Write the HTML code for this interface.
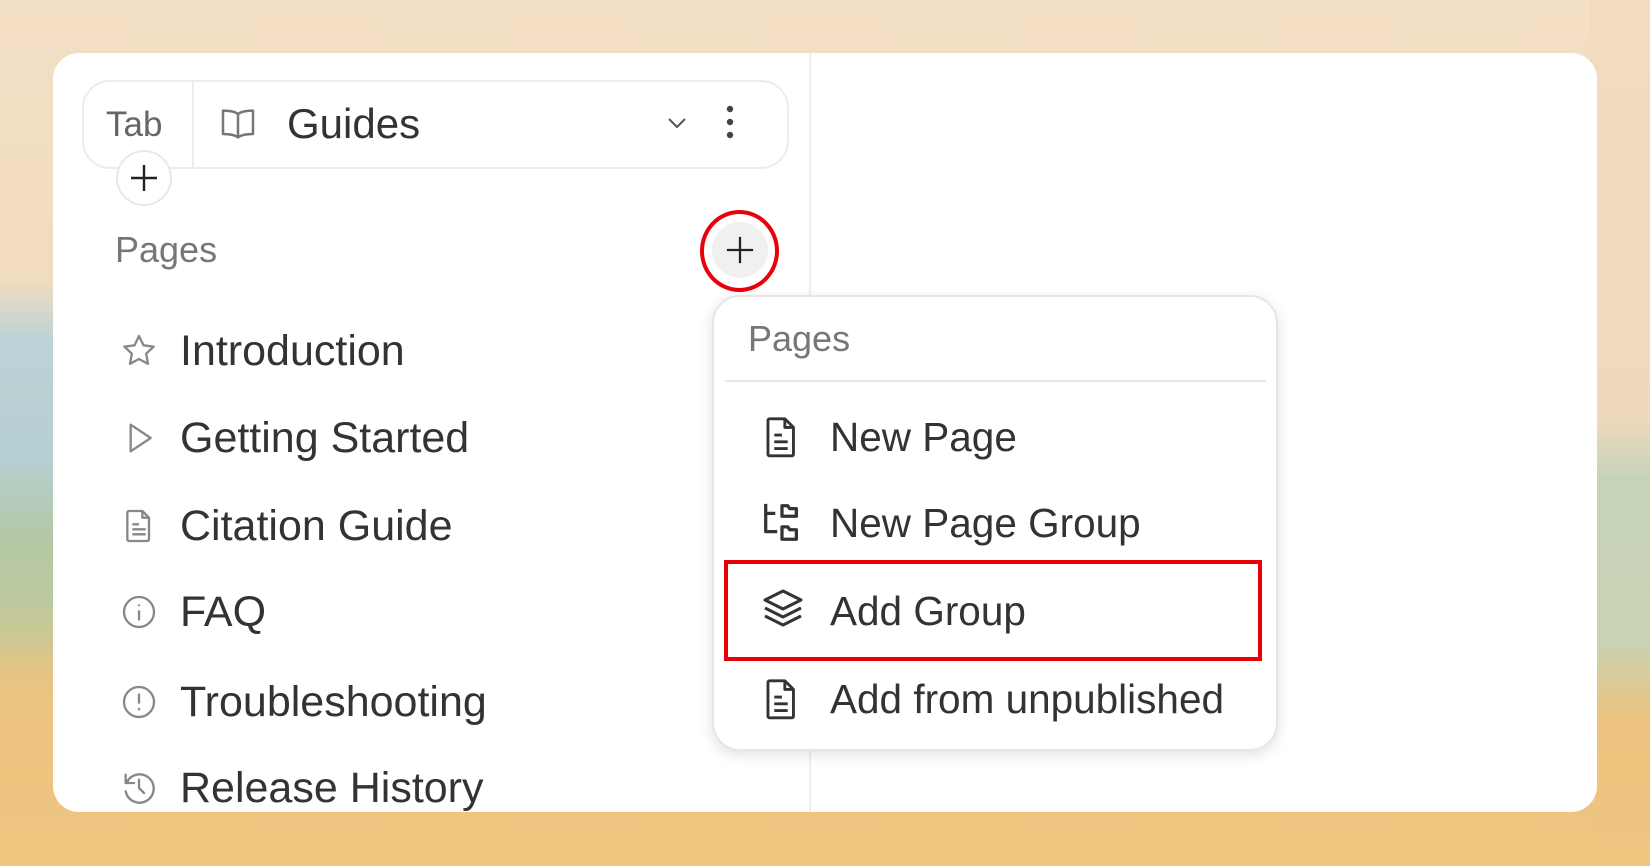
<!DOCTYPE html>
<html><head><meta charset="utf-8"><style>
*{margin:0;padding:0;box-sizing:border-box}
body{width:1650px;height:866px;overflow:hidden;font-family:"Liberation Sans",sans-serif;position:relative;
background:
linear-gradient(180deg,rgba(0,0,0,0) 0,rgba(0,0,0,0) 600px,#ecc47f 720px,#efc680 866px),
linear-gradient(180deg,#f3dfc5 0,#f1dcc0 280px,#bdd2d6 340px,#b6cfd2 460px,#b4c8a4 540px,#c0c99c 640px,#e6c584 700px);
}
.r{position:absolute;right:0;top:0;width:60px;height:866px;background:linear-gradient(180deg,#f2dcc0 0,#efd9bc 420px,#c6d3b8 480px,#c8d2b4 640px,#edc37f 720px,#efc680 866px)}
.card{position:absolute;left:53px;top:53px;width:1544px;height:759px;background:#fff;border-radius:26px;overflow:hidden}
.vd{position:absolute;left:756px;top:0;width:2px;height:759px;background:#efefef}
.a{position:absolute;white-space:nowrap}
.it{font-size:43px;color:#333;line-height:50px}
.pt{font-size:40.5px;color:#333;line-height:50px}
.ic{position:absolute}
</style></head><body>
<div class="r"></div>
<div class="card">
<div class="vd"></div>
<div class="a" style="left:29px;top:27px;width:707px;height:89px;border:2px solid #ececec;border-radius:28px"></div>
<div class="a" style="left:139px;top:29px;width:2px;height:87px;background:#ececec"></div>
<div class="a" style="left:53px;top:52px;font-size:35px;color:#666;line-height:40px">Tab</div>
<svg class="ic" style="left:164px;top:51px" width="42" height="40" viewBox="0 0 24 24" fill="none" stroke="#777" stroke-width="1.5" stroke-linejoin="round"><path d="M12 6c-2-1.5-5-2-9-2v14c4 0 7 .5 9 2 2-1.5 5-2 9-2V4c-4 0-7 .5-9 2zM12 6v14"/></svg>
<div class="a" style="left:234px;top:46px;font-size:42px;color:#333;line-height:50px">Guides</div>
<svg class="ic" style="left:610px;top:58px" width="28" height="24" viewBox="0 0 24 24" fill="none" stroke="#555" stroke-width="2"><path d="M4 8l8 8 8-8"/></svg>
<svg class="ic" style="left:672px;top:52px" width="10" height="34" viewBox="0 0 10 34" fill="#444"><circle cx="5" cy="4" r="3.2"/><circle cx="5" cy="17" r="3.2"/><circle cx="5" cy="30" r="3.2"/></svg>
<div class="a" style="left:63px;top:97px;width:56px;height:56px;border:2px solid #e8e8e8;border-radius:28px;background:#fff"></div>
<svg class="ic" style="left:75px;top:109px" width="32" height="32" viewBox="0 0 32 32" stroke="#222" stroke-width="2.4"><path d="M16 3v26M3 16h26"/></svg>
<div class="a" style="left:62px;top:177px;font-size:36px;color:#777;line-height:40px">Pages</div>
<div class="a" style="left:659px;top:169px;width:56px;height:56px;border-radius:50%;background:#f0f0f0"></div>
<div class="a" style="left:647px;top:157px;width:79px;height:82px;border:4px solid #e8000b;border-radius:50%"></div>
<svg class="ic" style="left:672px;top:182px" width="30" height="30" viewBox="0 0 32 32" stroke="#222" stroke-width="2.4"><path d="M16 2v28M2 16h28"/></svg>

<svg class="ic" style="left:66px;top:278px" width="40" height="40" viewBox="0 0 24 24" fill="none" stroke="#888" stroke-width="1.4" stroke-linejoin="round"><path d="M12 3l2.7 5.6 6.1.8-4.5 4.2 1.1 6.1L12 16.8l-5.4 2.9 1.1-6.1-4.5-4.2 6.1-.8z"/></svg>
<div class="a it" style="left:127px;top:273px">Introduction</div>
<svg class="ic" style="left:66px;top:365px" width="40" height="40" viewBox="0 0 24 24" fill="none" stroke="#888" stroke-width="1.4" stroke-linejoin="round"><path d="M7 4l12 8-12 8z"/></svg>
<div class="a it" style="left:127px;top:360px">Getting Started</div>
<svg class="ic" style="left:66px;top:453px" width="40" height="40" viewBox="0 0 24 24" fill="none" stroke="#888" stroke-width="1.4" stroke-linejoin="round"><path d="M6 3h8l4 4v13a1 1 0 0 1-1 1H6a1 1 0 0 1-1-1V4a1 1 0 0 1 1-1zM14 3v4h4M8 11h4M8 14h8M8 17h8"/></svg>
<div class="a it" style="left:127px;top:448px">Citation Guide</div>
<svg class="ic" style="left:66px;top:539px" width="40" height="40" viewBox="0 0 24 24" fill="none" stroke="#888" stroke-width="1.4"><circle cx="12" cy="12" r="9"/><path d="M12 11v6M12 7.5v1"/></svg>
<div class="a it" style="left:127px;top:534px">FAQ</div>
<svg class="ic" style="left:66px;top:629px" width="40" height="40" viewBox="0 0 24 24" fill="none" stroke="#888" stroke-width="1.4"><circle cx="12" cy="12" r="9"/><path d="M12 7v6M12 15.5v1.5"/></svg>
<div class="a it" style="left:127px;top:624px">Troubleshooting</div>
<svg class="ic" style="left:66px;top:715px" width="40" height="40" viewBox="0 0 24 24" fill="none" stroke="#888" stroke-width="1.4" stroke-linecap="round"><path d="M4.5 9A8.5 8.5 0 1 1 4 14M4 4v5h5M12 7v5l3 3"/></svg>
<div class="a it" style="left:127px;top:710px">Release History</div>

<div class="a" style="left:659px;top:242px;width:566px;height:456px;background:#fff;border:2px solid #e6e6e6;border-radius:28px;box-shadow:0 4px 14px rgba(0,0,0,.12)"></div>
<div class="a" style="left:695px;top:266px;font-size:36px;color:#777;line-height:40px">Pages</div>
<div class="a" style="left:672px;top:327px;width:541px;height:2px;background:#e6e6e6"></div>
<svg class="ic" style="left:705px;top:360px" width="46" height="48" viewBox="0 0 24 24" fill="none" stroke="#333" stroke-width="1.5" stroke-linejoin="round"><path d="M6 2.5h8l4.5 4.5v14a.8.8 0 0 1-.8.8H6a.8.8 0 0 1-.8-.8V3.3a.8.8 0 0 1 .8-.8zM14 2.5V7h4.5M8.5 11h4M8.5 14.5h7M8.5 18h7"/></svg>
<div class="a pt" style="left:777px;top:359px">New Page</div>
<svg class="ic" style="left:706px;top:446px" width="46" height="48" viewBox="0 0 24 24" fill="none" stroke="#333" stroke-width="1.7" stroke-linejoin="round"><path d="M3.5 2v14.5h6M3.5 7h5M12 3h3l1 1.5h3.5v4H12zM12 14h3l1 1.5h3.5v5H12z"/></svg>
<div class="a pt" style="left:777px;top:445px">New Page Group</div>
<svg class="ic" style="left:706px;top:532px" width="48" height="48" viewBox="0 0 24 24" fill="none" stroke="#333" stroke-width="1.5" stroke-linejoin="round"><path d="M12 3l9 4.5-9 4.5-9-4.5zM3 11.5l9 4.5 9-4.5M3 15.5l9 4.5 9-4.5"/></svg>
<div class="a pt" style="left:777px;top:533px">Add Group</div>
<div class="a" style="left:671px;top:507px;width:538px;height:101px;border:4px solid #e8000b"></div>
<svg class="ic" style="left:705px;top:622px" width="46" height="48" viewBox="0 0 24 24" fill="none" stroke="#333" stroke-width="1.5" stroke-linejoin="round"><path d="M6 2.5h8l4.5 4.5v14a.8.8 0 0 1-.8.8H6a.8.8 0 0 1-.8-.8V3.3a.8.8 0 0 1 .8-.8zM14 2.5V7h4.5M8.5 11h4M8.5 14.5h7M8.5 18h7"/></svg>
<div class="a pt" style="left:777px;top:621px">Add from unpublished</div>
</div>
</body></html>
